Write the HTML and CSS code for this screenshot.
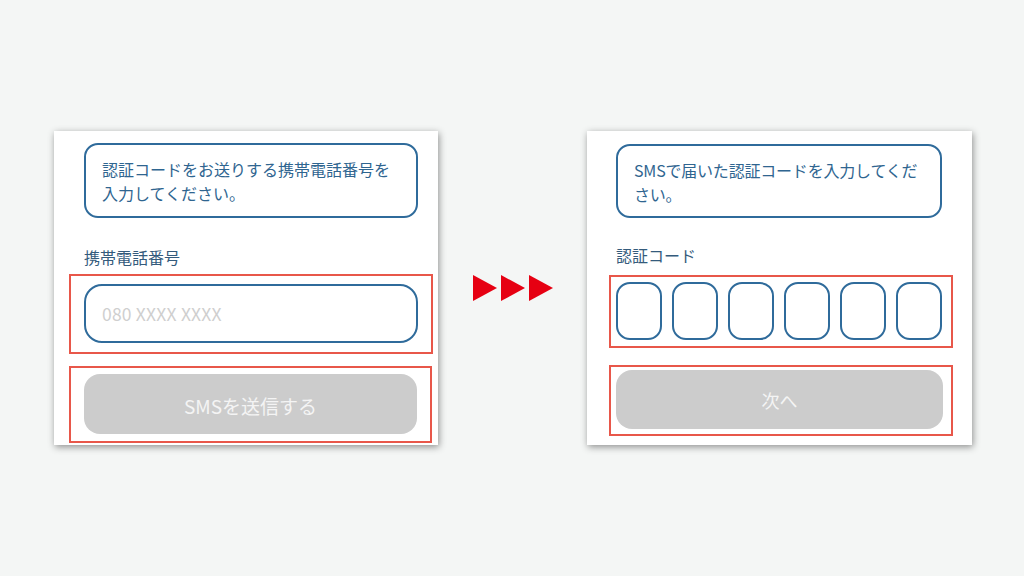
FILE: index.html
```html
<!DOCTYPE html>
<html lang="ja">
<head>
<meta charset="utf-8">
<title>SMS認証</title>
<link rel="stylesheet" href="styles.css">
</head>
<body>
<main class="stage">
  <section class="card card-phone">
    <div class="msg">認証コードをお送りする携帯電話番号を<br>入力してください。</div>
    <div class="label">携帯電話番号</div>
    <div class="hl hl-input">
      <div class="field"><span class="placeholder">080 XXXX XXXX</span></div>
    </div>
    <div class="hl hl-btn">
      <div class="btn btn-sms">SMSを送信する</div>
    </div>
  </section>

  <div class="arrows">
    <span class="tri"></span><span class="tri"></span><span class="tri"></span>
  </div>

  <section class="card card-code">
    <div class="msg">SMSで届いた認証コードを入力してくだ<br>さい。</div>
    <div class="label">認証コード</div>
    <div class="hl hl-code">
      <div class="codes">
        <span class="cbox"></span><span class="cbox"></span><span class="cbox"></span>
        <span class="cbox"></span><span class="cbox"></span><span class="cbox"></span>
      </div>
    </div>
    <div class="hl hl-next">
      <div class="btn btn-next">次へ</div>
    </div>
  </section>
</main>
</body>
</html>
```

FILE: styles.css
```css
* { box-sizing: border-box; }
html, body { margin: 0; padding: 0; }
body {
  width: 1024px;
  height: 576px;
  background: #f4f6f5;
  font-family: "Noto Sans CJK JP", "Noto Sans", sans-serif;
  overflow: hidden;
}
.stage {
  display: flex;
  align-items: flex-start;
  padding: 131px 0 0 54px;
}
.card {
  background: #fff;
  height: 314px;
  overflow: hidden;
  box-shadow: 1px 2px 7px rgba(0, 0, 0, 0.42);
  display: flex;
  flex-direction: column;
  flex-shrink: 0;
}
.card > * { flex-shrink: 0; }
.card-phone { width: 384px; padding: 12px 0 0 15px; }
.card-code { width: 385px; padding: 13px 0 0 22px; }

.msg {
  border: 2px solid #2f6b9b;
  border-radius: 14px;
  color: #2f6590;
  font-size: 16px;
  line-height: 24px;
  padding: 12px 16px 0;
  white-space: nowrap;
}
.card-phone .msg { margin-left: 15px; width: 334px; height: 75px; }
.card-code .msg { margin-left: 7px; width: 326px; height: 74px; line-height: 23.5px; padding-top: 13px; letter-spacing: -0.2px; }

.label {
  color: #345b7c;
  font-size: 16px;
  line-height: 24px;
}
.card-phone .label { margin: 27px 0 0 15px; }
.card-code .label { margin: 25px 0 0 7px; }

.hl { border: 2px solid #e8574a; }
.hl-input { width: 364px; height: 80px; margin-top: 5px; padding: 8px 13px; }
.hl-btn { width: 363px; height: 77px; margin-top: 12px; padding: 6px 13px 0; }
.hl-code { width: 344px; height: 73px; margin-top: 8px; padding: 5px 8px 0 5px; }
.hl-next { width: 344px; height: 71px; margin-top: 17px; padding: 3px 8px 0 5px; }

.field {
  height: 59px;
  border: 2px solid #2f6b9b;
  border-radius: 18px;
  display: flex;
  align-items: center;
  padding-left: 16px;
}
.placeholder {
  color: #cfcfcf;
  font-size: 17.5px;
  letter-spacing: 0.2px;
}

.btn {
  background: #cccccc;
  border-radius: 16px;
  color: #f4f4f4;
  display: flex;
  align-items: center;
  justify-content: center;
}
.btn-sms { height: 60px; font-size: 19px; padding-top: 2px; }
.btn-next { height: 59px; font-size: 18px; }

.codes {
  display: flex;
  gap: 10px;
}
.cbox {
  width: 46px;
  height: 58px;
  border: 2px solid #2f6b9b;
  border-radius: 14px;
}

.arrows {
  display: flex;
  gap: 4px;
  margin: 144px 35px 0 35px;
  width: 79px;
  flex-shrink: 0;
}
.tri {
  width: 0;
  height: 0;
  border-top: 13.5px solid transparent;
  border-bottom: 13.5px solid transparent;
  border-left: 24px solid #e60012;
}
```
